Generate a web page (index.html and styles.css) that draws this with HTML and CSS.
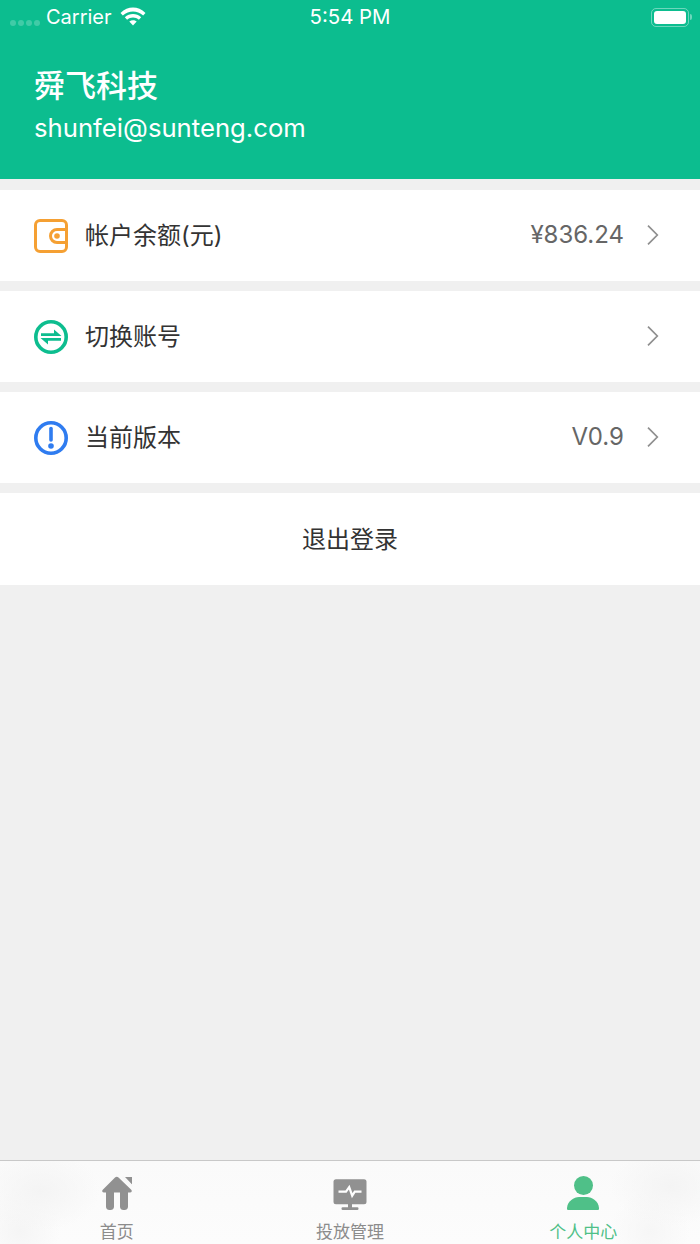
FILE: index.html
```html
<!DOCTYPE html>
<html lang="zh-CN">

<head>
    <meta charset="UTF-8" />
    <meta name="viewport" content="width=device-width, initial-scale=1.0" />
    <title>个人中心</title>
    <link rel="stylesheet" href="styles.css">
</head>

<body>
    <div class="app">
        <div class="profile-header">
            <div class="status-bar">
                <div class="status-left">
                    <div class="signal"><i></i><i></i><i></i><i></i></div>
                    <span class="carrier">Carrier</span>
                    <svg class="wifi" viewBox="0 0 26 20" width="26" height="20">
                        <path d="M.5 7C8-.2 18-.2 25.500 7l-2.300 2.500C17 4 9 4 2.800 9.500z" fill="#fff" />
                        <path d="M4.800 11.300c4.700-4.400 11.700-4.400 16.400 0l-2.300 2.400c-3.400-3-8.400-3-11.800 0z" fill="#fff" />
                        <path d="M9.300 15.600c2.200-1.900 5.200-1.900 7.400 0L13 19.500z" fill="#fff" />
                    </svg>
                </div>
                <span class="clock">5:54 PM</span>
                <div class="battery">
                    <div class="battery-body"><div class="battery-level"></div></div>
                    <div class="battery-cap"></div>
                </div>
            </div>
            <h1 class="company">舜飞科技</h1>
            <p class="email">shunfei@sunteng.com</p>
        </div>

        <div class="menu">
            <div class="menu-row">
                <svg class="menu-icon" viewBox="0 0 34 34" width="34" height="34">
                    <rect x="1.500" y="1.500" width="31" height="31" rx="4.500" fill="none" stroke="#f5a033" stroke-width="3" />
                    <path d="M32 10.500H23a6.500 6.500 0 0 0 0 13h9" fill="none" stroke="#f5a033" stroke-width="3" />
                    <circle cx="23" cy="17" r="2.800" fill="#f5a033" />
                </svg>
                <span class="menu-label">帐户余额(元)</span>
                <span class="menu-value">¥836.24</span>
                <svg class="chevron" viewBox="0 0 12 20" width="12" height="20">
                    <path d="M1 .7 10.300 10 1 19.300" fill="none" stroke="#8f8f8f" stroke-width="1.700" />
                </svg>
            </div>
            <div class="menu-row">
                <svg class="menu-icon" viewBox="0 0 34 34" width="34" height="34">
                    <circle cx="17" cy="17" r="15.200" fill="none" stroke="#0dbd8f" stroke-width="3.600" />
                    <path d="M7 13.300h13V9.500l7.500 6.500V16H7z" fill="#0dbd8f" />
                    <path d="M27 20.700H14v3.800L6.500 18H27z" fill="#0dbd8f" />
                </svg>
                <span class="menu-label">切换账号</span>
                <svg class="chevron" viewBox="0 0 12 20" width="12" height="20">
                    <path d="M1 .7 10.300 10 1 19.300" fill="none" stroke="#8f8f8f" stroke-width="1.700" />
                </svg>
            </div>
            <div class="menu-row">
                <svg class="menu-icon" viewBox="0 0 34 34" width="34" height="34">
                    <circle cx="17" cy="17" r="15.200" fill="none" stroke="#2f7cf0" stroke-width="3.600" />
                    <path d="M17 7.500v11.500" fill="none" stroke="#2f7cf0" stroke-width="3.600" stroke-linecap="round" />
                    <circle cx="17" cy="25" r="2.800" fill="#2f7cf0" />
                </svg>
                <span class="menu-label">当前版本</span>
                <span class="menu-value">V0.9</span>
                <svg class="chevron" viewBox="0 0 12 20" width="12" height="20">
                    <path d="M1 .7 10.300 10 1 19.300" fill="none" stroke="#8f8f8f" stroke-width="1.700" />
                </svg>
            </div>
            <div class="menu-row logout">退出登录</div>
        </div>

        <div class="tab-bar">
            <div class="tab">
                <svg viewBox="0 0 32 34" width="32" height="34">
                    <path d="M14 1.500c1-1 2.500-1 3.500 0L30 13.500c1.500 1.500.8 3-1 3H3c-1.800 0-2.500-1.500-1-3z" fill="#919191" />
                    <path d="M5 16h8v15a3.500 3.500 0 0 1-3.500 3h-1A3.500 3.500 0 0 1 5 31z" fill="#919191" />
                    <path d="M19 16h8v15a3.500 3.500 0 0 1-3.500 3h-1a3.500 3.500 0 0 1-3.500-3z" fill="#919191" />
                    <path d="M24 1h7v7.500z" fill="#919191" />
                    <path d="M21.500 .5 31.500 10.500" stroke="#f8f8f8" stroke-width="1.600" fill="none" />
                </svg>
                <span class="tab-label">首页</span>
            </div>
            <div class="tab">
                <svg viewBox="0 -2.700 34 34" width="34" height="34">
                    <rect x="0.500" y="0.500" width="33" height="25" rx="2.500" fill="#919191" />
                    <path d="M15 25h4v5h-4z" fill="#919191" />
                    <rect x="8.500" y="28.500" width="17" height="2.800" rx="1.200" fill="#919191" />
                    <path d="M5.500 13h7.500l3.200-4.500 3 8.500 2.600-4h6.700" fill="none" stroke="#fff" stroke-width="2.200" />
                </svg>
                <span class="tab-label">投放管理</span>
            </div>
            <div class="tab active">
                <svg viewBox="0 0 32 34" width="32" height="34">
                    <circle cx="16.500" cy="9.500" r="9.500" fill="#4fc088" />
                    <path d="M1 34c-1 0-1-1-1-2 .5-7 7-11 12-11h8c5 0 11.500 4 12 11 0 1 0 2-1 2z" fill="#4fc088" />
                </svg>
                <span class="tab-label">个人中心</span>
            </div>
        </div>
    </div>
</body>

</html>
```

FILE: styles.css
```css
* {
    box-sizing: border-box;
    margin: 0;
    padding: 0;
}

body {
    font-family: Inter, "Noto Sans CJK SC", sans-serif;
    background: #f0f0f0;
}

.app {
    width: 700px;
    height: 1244px;
    display: flex;
    flex-direction: column;
    overflow: hidden;
}

.profile-header {
    height: 179px;
    flex-shrink: 0;
    background: #0cbd8f;
    color: white;
    padding: 0 0 0 34px;
}

.status-bar {
    height: 34px;
    margin-left: -34px;
    padding: 0 8px 0 10px;
    display: flex;
    align-items: center;
    justify-content: space-between;
    position: relative;
}

.status-left {
    display: flex;
    align-items: center;
}

.signal {
    display: flex;
    gap: 2px;
    margin-top: 12px;
    margin-right: 6px;
}

.signal i {
    width: 6px;
    height: 6px;
    border-radius: 50%;
    background: rgba(255, 255, 255, 0.22);
}

.carrier {
    font-size: 20px;
    line-height: 34px;
}

.wifi {
    margin-left: 8px;
    margin-bottom: 3px;
}

.clock {
    position: absolute;
    left: 0;
    right: 0;
    text-align: center;
    font-size: 20.400px;
    line-height: 34px;
}

.battery {
    display: flex;
    align-items: center;
}

.battery-body {
    width: 38px;
    height: 19px;
    border: 1.500px solid rgba(255, 255, 255, 0.4);
    border-radius: 5px;
    padding: 2px;
}

.battery-level {
    height: 100%;
    background: white;
    border-radius: 3px;
}

.battery-cap {
    width: 2px;
    height: 6px;
    margin-left: 1px;
    background: rgba(255, 255, 255, 0.4);
    border-radius: 0 2px 2px 0;
}

.company {
    font-size: 31px;
    font-weight: 500;
    line-height: 44px;
    margin-top: 30px;
}

.email {
    font-size: 25.700px;
    line-height: 38px;
    margin-top: 1px;
}

.menu {
    display: flex;
    flex-direction: column;
    gap: 10px;
    padding-top: 11px;
}

.menu-row {
    height: 91px;
    background: white;
    display: flex;
    align-items: center;
    padding: 0 41px 0 34px;
}

.menu-icon {
    flex-shrink: 0;
    margin-right: 17px;
}

.menu-label {
    flex: 1;
    font-size: 24px;
    color: #333;
    margin-bottom: 4px;
}

.menu-value {
    font-size: 24px;
    color: #666;
    margin-right: 23px;
    margin-bottom: 2px;
}

.chevron {
    flex-shrink: 0;
    margin-bottom: 1px;
}

.logout {
    height: 92px;
    justify-content: center;
    padding: 0 0 4px;
    font-size: 24px;
    color: #333;
}

.tab-bar {
    margin-top: auto;
    height: 84px;
    flex-shrink: 0;
    display: grid;
    grid-template-columns: repeat(3, 1fr);
    border-top: 1px solid #c8c8c8;
    background:
        radial-gradient(ellipse 60px 40px at 40px 30px, #f4f4f4, transparent),
        radial-gradient(ellipse 40px 40px at 20px 70px, #f5f5f5, transparent),
        radial-gradient(ellipse 60px 40px at 670px 25px, #f4f4f4, transparent),
        radial-gradient(ellipse 40px 40px at 650px 70px, #f6f6f6, transparent),
        linear-gradient(#fafafa, #fcfcfc);
}

.tab {
    display: flex;
    flex-direction: column;
    align-items: center;
    padding-top: 15px;
    color: #8c8c8c;
}

.tab-label {
    font-size: 17px;
    line-height: 24px;
    margin-top: 10px;
}

.tab.active {
    color: #4fc088;
}
```
